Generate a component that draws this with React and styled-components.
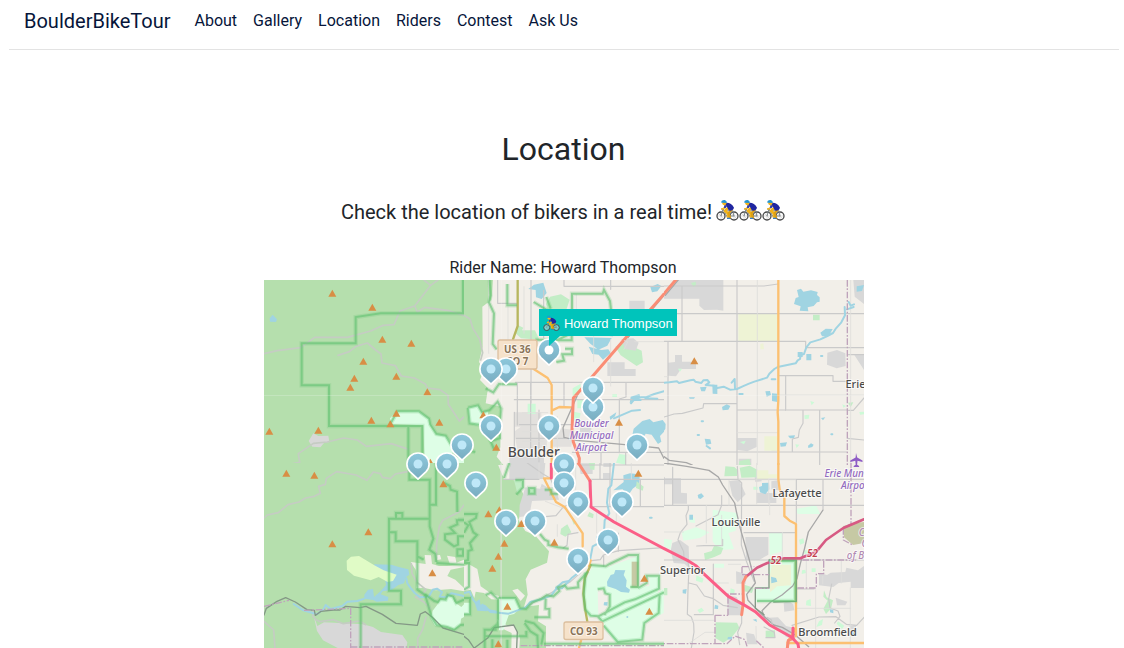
import React from "react";
import styled, { createGlobalStyle, css } from "styled-components";

const GlobalStyle = createGlobalStyle`
  * { box-sizing: border-box; }
  body {
    margin: 0;
    height: 648px;
    overflow: hidden;
    background: #fff;
    color: #212529;
    font-family: Roboto, "Liberation Sans", sans-serif;
    font-size: 16px;
    line-height: 24px;
  }
`;

const Page = styled.div`
  display: flex;
  flex-direction: column;
  height: 648px;
  padding: 0 5px 0 9px;
  overflow: hidden;
`;

const NavBar = styled.nav`
  display: flex;
  align-items: flex-start;
  flex: none;
  height: 50px;
  padding: 6px 15px 0;
  border-bottom: 1px solid #e3e3e3;
`;

const Brand = styled.a`
  margin-right: 24px;
  color: #06153a;
  font-size: 20px;
  line-height: 30px;
  white-space: nowrap;
`;

const NavLinks = styled.div`
  display: flex;
  gap: 16px;
  line-height: 29px;
`;

const NavLink = styled.a`
  color: #06153a;
  white-space: nowrap;
`;

const Main = styled.main`
  display: flex;
  flex-direction: column;
  align-items: center;
  padding-top: 80px;
`;

const Title = styled.h2`
  margin: 0 0 32px;
  padding-right: 1px;
  font-size: 32px;
  font-weight: 400;
  line-height: 38px;
`;

const Lead = styled.p`
  display: flex;
  align-items: center;
  margin: 0 0 32px;
  padding-right: 2px;
  font-size: 20px;
  line-height: 24px;
  white-space: nowrap;
`;

const Riders = styled.span`
  display: flex;
  margin: -3px 0 0 4px;
`;

const RiderName = styled.div`
  padding-right: 2px;
  line-height: 24px;
`;

const MapFrame = styled.div`
  position: relative;
  width: 600px;
  height: 368px;
  flex: none;
  overflow: hidden;
  background: #f2efe9;
`;

const MapCanvas = styled.svg`
  display: block;
`;

const fills = {
  forest: "#b5dfad",
  park: "#defee6",
  green: "#c3edc6",
  grey: "#d8d8d8",
  town: "#e2e0dd",
  water: "#a0d4e2",
  beige: "#f2efe9",
  meadow: "#eef3d5",
  lime: "#e0fbc6",
  olive: "#c6c9a4",
  mint: "#cdfad7",
};

const Area = styled.path`
  fill: ${(p) => fills[p.$kind]};
`;

const lines = {
  road: ["#cacaca", 3.5],
  minor: ["#dedddb", 2.5],
  trail: ["#c5ccc3", 5],
  rail: ["#a7a7a7", 4],
  darkTrail: ["#849886", 4],
  county: ["#bfa3bb", 4],
  orange: ["#fcc071", 7],
  olive: ["#b7b65f", 7],
  salmon: ["#fa8d75", 9],
  pink: ["#fb5f87", 9],
  toll: ["#d75a83", 8],
  river: ["#a0d4e2", 6],
};

const Line = styled.path`
  fill: none;
  stroke: ${(p) => lines[p.$kind][0]};
  stroke-width: ${(p) => lines[p.$kind][1]};
  stroke-linejoin: round;
  stroke-linecap: ${(p) => (p.$kind === "county" ? "butt" : "round")};
  ${(p) => p.$kind === "county" && css`stroke-dasharray: 20 5 5 5;`}
`;

const Halo = styled.path`
  fill: none;
  stroke: #62c272;
  stroke-linejoin: miter;
  stroke-width: ${(p) => p.$width};
  opacity: ${(p) => p.$alpha};
`;

const Peak = styled.path`
  fill: #d88e45;
`;

const MapLabel = styled.text`
  font-family: "Noto Sans", "Open Sans", sans-serif;
  font-size: ${(p) => p.$size || 11}px;
  font-style: ${(p) => (p.$italic ? "italic" : "normal")};
  font-weight: ${(p) => p.$weight || 500};
  fill: ${(p) => p.$color || "#4b4b4b"};
  stroke: rgba(255, 255, 255, 0.65);
  stroke-width: 2px;
  paint-order: stroke;
  text-anchor: middle;
`;

const Shield = styled.rect`
  fill: #f6e2ca;
  stroke: #dcbf9e;
  stroke-width: 1.3;
`;

const Pin = styled.svg`
  position: absolute;
  left: ${(p) => p.$x - 11.8}px;
  top: ${(p) => p.$y - 12}px;
  width: 24px;
  height: 30px;
  overflow: visible;
`;

const Tooltip = styled.div`
  position: absolute;
  left: 275px;
  top: 29px;
  display: flex;
  align-items: center;
  width: 138px;
  height: 27px;
  padding: 2px 0 0 4px;
  background: #00c4bb;
  color: #fff;
  font-family: "Liberation Sans", Arial, sans-serif;
  font-size: 13px;
  line-height: 20px;
  white-space: nowrap;

  &::after {
    content: "";
    position: absolute;
    left: 10px;
    top: 100%;
    border-top: 10px solid #00c4bb;
    border-right: 11px solid transparent;
  }
`;

const TooltipText = styled.span`
  margin-left: 4px;
  letter-spacing: -0.07px;
`;

function Cyclist({ size = 23 }) {
  return (
    <svg width={size} height={size} viewBox="0 0 69 69" fill="none">
      <circle cx="15" cy="51" r="12" fill="#fff" fillOpacity=".45" stroke="#48494a" strokeWidth="4" />
      <circle cx="54" cy="51" r="12" fill="#fff" fillOpacity=".45" stroke="#48494a" strokeWidth="4" />
      <path d="M15 40v22M4 51h22M54 40v22M43 51h22M7 43l16 16M46 43l16 16" stroke="#999" strokeWidth="1" />
      <path d="M15 51l6-21 12 23 17-18 4 16H34M22 36l27-1M15 30h9" stroke="#7b8589" strokeWidth="3" />
      <path d="M36 27l-9 9 9 7v13" stroke="#f2b31a" strokeWidth="8" strokeLinejoin="round" />
      <path d="M48 31L38 42l4 16" stroke="#dda013" strokeWidth="7" strokeLinejoin="round" />
      <path d="M29 12c9-2 20 4 25 14-2 7-9 11-16 8l-5-10-9-6z" fill="#2026a0" />
      <path d="M29 18l-5 10-8 3" stroke="#f5b51b" strokeWidth="5" />
      <path d="M29 19l-3 8" stroke="#2437bd" strokeWidth="6" />
      <circle cx="25" cy="13" r="6" fill="#f4b51c" />
      <path d="M16 9C17 2 29 1 32 8v4l-16-1z" fill="#2795d0" />
      <path d="M33 58h9" stroke="#397dc2" strokeWidth="4" />
    </svg>
  );
}

// Each tile is 200 by 185 px, drawn in a 600 by 555 coordinate space.
const tiles = [
  {
    x: 0, y: 0,
    areas: [
      ["forest", "M0 0H600V555H0Z"],
      ["park", "M380 432L378 415 398 394 465 393 495 416 497 434 517 462 545 467 560 485 572 515 555 522 600 540V555H482L478 436Z"],
      ["grey", "M148 460L163 468 193 467 196 486 180 489 169 502 145 500 134 483Z"],
      ["water", "M26 104L39 118 36 126 18 125 17 115Z"],
    ],
    lines: [
      ["trail", "M0 221L40 212 110 203 152 172 250 172 320 153 358 136 390 134 408 93 452 78 500 16 480 0M500 16L522 0M452 78L460 96 482 82 555 92 600 107"],
      ["trail", "M222 226L256 215 276 199 310 189 335 210 351 222 354 249 394 257 412 288 451 294 484 312 490 324 528 329 552 346 553 373 586 423 600 411"],
      ["trail", "M65 555L107 547 103 521 148 490 190 486 239 474 280 480 307 499 382 491 434 508"],
    ],
    borders: [
      "M597 0V100H350L275 111V190H113V316H195V438H475V555M433 438V555",
      "M380 430L400 394H465L495 416 499 434 517 462 545 467 565 500",
    ],
    peaks: [[205,40],[325,82],[355,178],[442,190],[298,244],[397,289],[271,295],[259,322],[490,336],[397,400],[322,421],[379,432],[526,427],[16,454],[163,451],[499,547]],
  },
  {
    x: 200, y: 0,
    areas: [
      ["forest", "M0 0H87L82 60 55 80 56 200 45 246 60 270 48 300 72 325 65 370 111 380 109 502 98 530 118 555H0Z"],
      ["park", "M12 382L42 376 52 397 73 392 69 427 48 438 16 430Z"],
      ["green", "M246 72L258 50 291 43 317 59 303 101 255 112Z M161 135L178 143 174 151 213 151 226 179 171 175 155 160Z M454 200L480 188 511 202 533 212 537 247 518 258 490 239 470 226Z"],
      ["mint", "M326 325L350 311 348 340 326 352Z M330 395L350 400 345 425 330 421Z M340 360H362V385H340Z"],
      ["grey", "M496 62H542V93H600V116H520V89H496Z M472 177L508 175 524 188 515 212 483 207Z M430 247H482V267H515V288H430Z M348 443H382V472H348Z"],
      ["town", "M150 455L200 419 251 426 248 500 161 514Z M150 397H232V440H150Z M255 440L330 450 322 500 262 500Z"],
      ["grey", "M136 527H240V555H136Z"],
      ["water", "M210 14L238 8 248 39 233 57 216 52 215 30 193 27Z M361 172L443 174 430 197 403 209 379 191Z M374 200L412 210 433 208 440 219 417 239 404 224 385 222Z M509 446L535 423 557 417 568 427 596 420 600 425V455L588 468 592 485 582 492 563 464 545 461 528 490 501 485Z M559 21L581 12 592 18 580 34 564 37Z M500 350L526 342 530 353 511 361 497 370Z M437 410L457 397 453 409 439 420Z"],
      ["mint", "M445 343H459V351H445Z M191 371H215V402H191Z M230 447H239V464H230Z M391 347L401 357 393 366Z M466 522L487 525 484 554 456 548Z"],
    ],
    lines: [
      ["road", "M201 0V370M101 0V70M300 19H600M300 0V19M101 70H160M239 31V173M154 307H600M486 307V351L466 357V518M151 359H600M160 307V435M200 310V520M151 397V502M225 390V545M300 307V380M166 434H327M157 475H303M325 517H600M411 517V555M485 517V555M440 0V28"],
      ["minor", "M74 0V220M132 80V180M180 20V160M337 45V110M389 107V245M400 155L446 170M512 185H600M440 178V318M175 398H251M175 455H300M177 484H235M280 410V520"],
      ["trail", "M0 106L18 117 27 146 47 178 56 218 50 240"],
      ["orange", "M209 267L251 294 263 315V555M263 392L286 381 322 382"],
      ["olive", "M161 0V138L147 178"],
      ["rail", "M604 42L492 173M345 335L297 443 300 472 337 481 450 491 546 500 584 504 600 535"],
      ["salmon", "M600 42L488 170 358 321 328 354 324 450 328 486 346 535 345 555"],
      ["minor", "M481 182L491 186 480 208"],
      ["river", "M501 370L513 356 532 352 548 351 571 342 600 334M508 360L530 360M544 355L580 356M450 415L504 392 528 390"],
    ],
    borders: [
      "M77 0L80 46 75 67 90 100 86 192 98 208",
      "M130 12V76H159M324 113V41H416L420 30 438 63 444 113M209 66L252 92M247 51L260 86M214 179L281 180 323 159 323 181H282M303 206H324V223H295L300 242 277 246",
      "M65 325L88 337 105 312 159 313M12 383L42 376 54 397 76 391 101 365 112 386 107 438 108 474 80 484 91 510M12 383L17 430 45 434M0 510L34 516",
    ],
    peaks: [[58,405],[97,502],[465,427]],
  },
  {
    x: 400, y: 0,
    areas: [
      ["grey", "M38 0H178V92L159 89 120 90 106 77 106 56H0V37Z M33 225H54V245H96V267H51L36 289 12 287V248L33 246Z M490 218L519 210 544 220 545 258 518 265 489 254Z M220 474H278V501L250 514 220 510Z M322 475H340V512H322Z M568 0H600V72L572 50Z M571 225H600V270Z M224 536H262V555H224Z"],
      ["meadow", "M223 102H343V183H223Z M301 469H340V512H301Z M289 192L298 190 300 208 289 208Z"],
      ["water", "M399 30L411 26 418 35 441 31 461 36 459 45 467 52 467 65 459 67 449 78 431 82 433 94 407 92 410 79 390 72 395 54 404 51Z M401 216H416V231H401Z M427 222H442V241H427Z M469 158L485 146 506 147 495 167 474 169Z M174 381L188 373 199 378 193 389 176 391Z M304 334L318 333 321 345 308 350Z M324 340L340 341 340 366 324 363Z M145 314H160V342L146 341Z M108 322L128 320 123 334 112 334Z M122 476L139 478 142 491 126 494Z M348 489L369 487 365 499 350 500Z M372 467L393 466 390 475 378 475Z M432 497L441 490 449 494 445 501 433 504Z M471 414L484 412 477 421Z M578 19L600 15 594 33 578 35Z M75 352L93 352 90 356 77 356Z M0 425L5 432 4 447 0 452Z"],
      ["green", "M447 104H467V121H447Z M81 9L95 5 96 15 89 21Z M226 543L256 537 261 555H224Z M552 368L568 367 560 382Z"],
      ["mint", "M42 266L54 266 48 275Z M439 363L451 367 443 376Z M421 406L436 404 434 416 422 417Z M535 373L546 378 538 383Z M228 486L245 482 240 493Z M394 493L406 494 398 504Z M586 396L600 395V403L588 404Z"],
    ],
    lines: [
      ["road", "M0 18H300L342 12M0 101H600M54 20V184M0 184H425V203H600M12 184V555M219 0V555M343 287H507V304H560M219 390H550M0 411L30 402 55 400 117 384 119 371H219M365 289V391M417 391V430L406 450 403 472 385 477V515M467 390V555M0 516H550M550 224H600M550 391H568L600 354M550 475L600 480"],
      ["minor", "M280 0V555M219 458H340M0 290H12M560 0V555M343 345H600M0 100L20 99"],
      ["river", "M0 308L16 307 39 304 45 309 79 301 89 299 94 305 112 309 118 301 130 300 136 307 125 315 151 317 160 324 179 320 198 329 219 327 236 319 255 311 271 305 309 293 316 281 331 267 341 261 395 250 401 241 408 237 410 225 420 222 427 202 439 187 469 178 490 168 507 159 516 145 532 127 543 106 542 81M203 308L212 297 213 327M323 298H334M226 342H236"],
      ["river", "M554 66L560 77 570 73M549 88L569 81M471 228H475M101 465H105M113 424H117M502 463H505M128 498L138 505"],
      ["orange", "M343 0V361L341 397 343 425V555"],
      ["rail", "M4 46L46 -4"],
      ["salmon", "M-4 46L40 -6"],
      ["county", "M550 0V555"],
      ["rail", "M0 530L16 541 67 548 85 555"],
    ],
    borders: [], peaks: [[91,243]],
  },
  {
    x: 0, y: 183,
    areas: [
      ["forest", "M0 0H600V555H0Z"],
      ["grey", "M148 454L160 489 180 478 297 484 327 492 351 507 415 516 430 538 427 555H221L177 532 159 504Z"],
      ["beige", "M440 297L485 303 482 276 501 277 504 303 525 309H549L600 305V312L560 320 550 339 574 350 600 375V385L561 378 515 382 477 374 456 376 460 353 455 320Z M516 277L528 276 532 289 517 292Z M549 278L574 282 577 299 600 290V306L557 302Z"],
      ["water", "M331 304L382 305 407 313 433 319 436 335 426 342 420 361 403 366 383 381 356 385 350 394 373 402 372 413 338 416 327 411 301 407 301 395 312 380 327 378 330 402 351 383 366 366 364 352 347 332 371 330 330 312Z"],
      ["lime", "M248 293L261 281 285 279 331 307 359 322 398 335 387 354 371 357 344 342 320 352 270 338 249 321Z"],
      ["park", "M521 424L529 409 546 409 550 398 567 401 571 416 592 432 600 424V462L591 467 589 486 570 499 535 490 513 488 500 464 506 443Z"],
    ],
    lines: [
      ["trail", "M0 165L10 156 43 149 72 125 105 117 125 105 151 100 169 91 164 70 184 64 187 46 218 26 276 36 309 52 328 27 349 32 355 43 379 47 394 33 415 29 434 25"],
      ["trail", "M0 475L29 501 33 555M148 441L146 459 156 470 169 476 208 470 238 482 286 474 305 485M600 126L584 148 536 172 526 190 518 241 517 291M442 302L444 331 459 358 486 380 473 395 454 402 481 418 499 437M486 462L476 499 461 526 461 555"],
      ["river", "M89 423L118 442 159 454 179 438 185 426 200 438 235 429 250 416 280 414 301 407M427 346L430 361 439 374 452 390 468 403 494 401 506 380 519 377 534 387 527 401 545 403 562 391 600 399"],
      ["darkTrail", "M0 456L7 436 39 415 65 404 94 417 129 440 151 442 154 457 171 445 208 441 228 441 245 430 288 434 306 430 355 454 396 481 460 487 469 453 484 446 505 463 537 495 600 514"],
      ["county", "M0 430L75 412M120 442L260 436V555M260 552H600"],
    ],
    borders: [
      "M436 0V50H497V190L508 227 496 260 514 273 517 297M516 0V125H497M496 167H375V383H411V424H290V555M396 165V150H415V165M375 208H395V235H460V280L479 290M460 235V380L490 401",
      "M582 170H600M580 147L579 86 560 80 558 69 540 60M600 172H579L580 184 558 194 573 210 543 214V230L570 250 582 245V220H600M580 259H597V278H580ZM517 300L600 305",
      "M483 394L511 414 522 417 529 408 545 410 551 396 567 401 577 420 600 410M483 394L503 463 518 486 549 492 571 500 589 486 600 485",
    ],
    peaks: [[67,31],[151,37],[538,63],[313,207],[205,243],[505,330]],
  },
  {
    x: 200, y: 183,
    areas: [
      ["forest", "M0 0H100L120 48 152 52 177 91 180 130 163 170 184 204 213 217 255 265 249 299 200 320 185 349 191 395 180 432 225 426 222 475 246 490 246 555H0Z"],
      ["beige", "M0 309L15 304 40 318 50 370 82 392 105 399 104 410 82 409 60 390 35 386 31 405 20 380 0 384Z M145 382L161 377 183 398 170 414Z M100 468L132 490 148 484 168 524 166 555H142L143 510 105 492Z"],
      ["grey", "M136 0H244L240 48H136Z M184 73L229 77 233 62 280 92 285 110 204 114 196 158 166 162 167 126Z M344 1H386V33H350Z M417 30H438V50H417Z M418 0H442V12H418Z"],
      ["park", "M104 405H155L168 436 150 453 134 457 118 502 105 502Z M385 308L431 313 523 278 522 370H556V340H585V376L580 393 599 376V450L542 480 534 530 454 536 417 487 402 458 376 462 361 445 363 360Z M0 419H18V454H0Z"],
      ["beige", "M401 379L421 377 424 391 438 395V431L423 456 403 458Z"],
      ["olive", "M503 296H523V374H503Z"],
      ["water", "M429 356L440 336 450 333 454 321 484 322 479 336 488 352 486 371 498 380 495 389 471 387 455 378 430 370Z M478 37L498 31 517 33 527 43 526 62 506 77 497 91 485 91 476 79 448 82 479 57Z M294 207L303 190 318 201 303 216Z M420 418L431 417 430 428 419 427Z M32 419L47 409 50 428 65 433 69 445 40 443Z"],
      ["green", "M150 52L178 54 176 76 160 91Z M195 76H212V92H195Z M518 55L539 71 536 83 516 75Z M376 147L389 154 387 166 370 160Z M291 197L310 184 322 208 304 221 289 213Z M324 172L337 174 330 186Z M374 0H393L391 21 379 19Z"],
    ],
    lines: [
      ["road", "M190 0L237 33 259 46 271 75M120 49H225M376 49H600M343 6H600M408 0V48M438 0V130M529 48V130M384 131H600M244 161L276 158 298 132 311 126M298 255L309 247 312 214 342 209M383 293L409 290 418 276 464 263 600 254M419 278V310M463 210V265M195 427L317 358 350 329"],
      ["minor", "M111 0V555M225 0V46M230 74H313M244 115L304 138M335 0V80M502 0V48M382 49V135M457 140V180M280 185V220M398 150V210"],
      ["river", "M450 0L442 67 433 77 429 119 436 151 422 172 420 208 399 223 405 240 386 250 379 287M0 390L17 386 27 410 42 428 62 428 80 447 134 452 185 433 199 417 238 407 262 397 277 377 294 376 322 346 342 330"],
      ["river", "M55 425L67 440 98 446M276 375L296 358 315 354M490 462H490M558 164H563"],
      ["orange", "M259 46H240L264 94 276 117 302 132 356 211V250M375 309L380 292M345 555L353 525"],
      ["olive", "M380 306L362 346 358 391 363 436 370 476"],
      ["pink", "M262 0V45"],
      ["salmon", "M343 0L378 54"],
      ["pink", "M378 54L381 132 450 177 604 259"],
      ["darkTrail", "M0 520L13 530 30 555M31 555L72 524 91 494 149 486 160 507 158 555"],
      ["county", "M170 548H600"],
    ],
    borders: [
      "M0 153H38L36 165 16 177 28 208 39 216 18 240 24 260 13 264 12 291 0 295M0 178L13 187 0 209M0 300H15V371L0 380",
      "M136 0L120 45M154 51H177V73L157 95M195 75H212V92H195ZM242 80H262V92H283",
      "M228 213L242 230 253 235 253 246 282 253 314 257",
      "M0 405H18V454H0M65 396L81 389 102 409V496M103 405H154L168 436 186 438 205 418 231 408 248 397 268 400 286 384 282 373 302 367 310 377 343 373 342 358 372 325",
      "M245 407L244 437 256 438V463H211M62 555V500H95V488L80 500M182 474L210 481 239 510 232 545M62 520H187V503M182 480L199 505 220 518 222 555M85 529V555M130 530V555M240 542H600",
      "M380 306L425 310 437 303 493 276H522V372H499M365 329L359 396 364 440 380 458 401 460 415 475 600 388M401 379L419 376 424 391 437 395V431L421 456M522 375L548 360V338H585V377L513 409 482 418 403 460M587 394L584 450L541 480 535 530 461 537 419 488",
    ],
    peaks: [[523,31],[73,153],[106,141],[172,182],[121,241],[271,238],[103,280],[85,316],[541,346],[130,430],[556,445],[103,543]],
  },
  {
    x: 400, y: 183,
    areas: [
      ["grey", "M0 46H51V89L69 91V122H26V64H0Z M195 54L225 51 245 94 221 118 205 98Z M271 35L291 32 293 55 274 57Z M322 55L343 52V82L322 79Z M277 89L337 91V120H277Z M244 222H313V275L285 291H246Z M25 240L48 231 74 250 76 315 61 302 29 300 20 263Z M465 330L489 336 500 329 544 327 547 314 582 322 600 309V375H560V356L524 360 508 372 465 367Z M191 397L218 402 237 443V457H191Z M359 420L373 413 388 424 391 442 361 446Z M216 325L246 333 245 362H217Z M300 465L342 463 366 489 393 495 394 533 366 521 335 493Z M246 509L270 514 281 544H250Z M515 404L550 416 544 427 519 427Z M556 490L576 487 576 500 558 500Z"],
      ["park", "M315 291H397V417H275V371H314Z M146 140L220 150 215 203 193 210 210 258 164 262 146 235Z M53 207L96 193 137 208 107 225 58 233Z M0 227L24 231 20 258 0 250Z M315 210H356V264L317 277Z M75 166L92 164 93 180 77 178Z M151 302H180V314H151Z M395 138L456 127 469 153H401Z"],
      ["green", "M120 271L143 264 151 247 178 255 171 273 151 282 123 292Z M184 10L211 12 222 22 219 39 181 40Z M227 14L257 8 280 20 279 43 232 44Z M155 478L219 479 226 494 203 523 178 539 154 525Z M241 365L269 374 264 390 241 385Z M305 503L333 502V524H305Z M480 382L488 403 507 412 501 437 486 453 478 437 491 413 478 401Z M0 375H10V397H0Z"],
      ["olive", "M538 189L580 179 600 177V240L567 246 540 223Z"],
      ["meadow", "M279 22H313V48H279Z M297 34H340V45H297Z M323 305H381V367L339 370 319 388 315 358Z"],
      ["water", "M294 60L315 59 316 79 304 94 288 88 285 72 294 69Z M76 155H87V170H76Z M101 96L112 91 120 100 110 108 103 106Z M56 380L68 378 66 392 56 391Z M321 341L336 345 340 356 322 361Z M153 425L163 428 162 438 151 437Z M498 439L508 440 508 451 498 448Z M560 506L576 510 574 519 558 519Z M266 470L277 468 279 477Z M192 522L205 521 204 530 190 529Z"],
      ["mint", "M268 71H281V80H268Z M97 337L119 347 115 359 96 353Z M200 376L212 380 211 397 198 391Z M443 316H455V327H443Z M465 475L477 468 474 486 457 492Z M522 475L541 488 534 499 518 482Z M100 441L113 434 120 443 107 450Z M427 413L440 408 441 429 426 427Z M414 322L424 320 426 330 413 333Z M405 230L418 226 421 240 408 245Z M421 261L436 263 432 273 421 272Z"],
    ],
    lines: [
      ["road", "M0 49H600M0 127H600M0 43V127M26 13V127M73 127V140L66 158 69 184 49 209 42 230 59 266 60 282M173 98V127L162 155 96 189M220 10L222 48 233 60 232 246 247 294 270 355M98 249L120 248 176 248 176 229M60 286L72 298 75 315 72 380 70 454 82 462 89 482 90 507 82 555M0 291H600M148 303V455H91M75 360L98 366 121 399 148 407 177 427 220 434M233 450V480L221 508 227 545M397 51V178M397 209H240M477 49V138M397 378H450M503 363L494 408 498 435 522 444 528 460 512 480M384 487L465 462 516 461 547 484 578 487 600 463"],
      ["minor", "M0 207H58M127 127V240M173 157V246M195 52V127M225 50H395M278 0V123M314 49V124M355 208V285M193 304H230M151 360H193M191 393V455M0 472H152M75 541L123 508H151M455 380V555M398 436H560M559 375V555M532 291V360M427 291V370M476 340V363M317 112V155M276 490L277 533"],
      ["rail", "M0 0L68 10 135 22 163 42 176 66 212 120 217 145 229 197 256 291 274 360 248 394 252 412 289 450 329 486 355 493 394 516 434 551M477 141L433 207 421 259 409 302 399 347 386 369 354 396 320 417 294 443 303 465"],
      ["road", "M300 492L331 508 333 524 306 524M309 463L322 470 326 491"],
      ["orange", "M343 0V48L347 80 361 101V159L377 173 396 183V493L371 537 370 555M396 492V520M370 540H600"],
      ["darkTrail", "M315 291V375H274V436L300 455M315 291H397V415L329 417"],
      ["county", "M561 0V183L538 193V231L566 246M575 291H409M400 375H457V332H479V293M274 376H315M234 311V335M234 311H271M234 335H315M192 457V393H235M153 457H192M153 457V542H0M153 542H189L214 519 243 530 249 550M277 533L300 555"],
      ["toll", "M600 169L538 195 486 231 457 266 409 286 361 286 310 300 279 314 246 341"],
      ["salmon", "M246 341L237 359 238 418 233 455M370 555L373 532 388 526"],
      ["pink", "M0 257L70 292 97 309 118 331 193 400 237 424 274 446 317 486 382 522 402 543 404 555M387 495V521"],
    ],
    borders: ["M315 294H394V414H279"],
    peaks: [],
  },
];

function Tile({ tile }) {
  return (
    <svg x={tile.x} y={tile.y} width="200" height="185" viewBox="0 0 600 555">
      {tile.areas.map(([kind, d], i) => <Area key={i} $kind={kind} d={d} />)}
      {tile.lines.map(([kind, d], i) => <Line key={i} $kind={kind} d={d} />)}
      {tile.borders.map((d, i) => (
        <g key={i}>
          <Halo $width={13} $alpha={0.22} d={d} />
          <Halo $width={6} $alpha={0.6} d={d} />
        </g>
      ))}
      {tile.peaks.map(([x, y], i) => <Peak key={i} d={`M${x} ${y - 11}l12 21h-24z`} />)}
    </svg>
  );
}

const purple = "#936bc0";
const labels = [
  [269.7, 177, "Boulder", { $size: 13.8 }],
  [327.5, 147, "Boulder", { $size: 9.8, $italic: true, $color: purple }],
  [327.5, 159, "Municipal", { $size: 9.8, $italic: true, $color: purple }],
  [327.5, 171, "Airport", { $size: 9.8, $italic: true, $color: purple }],
  [591.5, 108, "Erie", {}],
  [533, 216.5, "Lafayette", {}],
  [472, 246, "Louisville", {}],
  [418.5, 294, "Superior", {}],
  [563.5, 355.5, "Broomfield", {}],
  [592, 197, "Erie Municipal", { $size: 9.8, $italic: true, $color: purple }],
  [592.5, 209, "Airport", { $size: 9.8, $italic: true, $color: purple }],
  [613, 256, "City and", { $size: 9.8, $italic: true, $color: "#b18bb4" }],
  [613, 267, "County", { $size: 9.8, $italic: true, $color: "#b18bb4" }],
  [613, 279, "of Broomfield", { $size: 9.8, $italic: true, $color: "#b18bb4" }],
  [512, 284, "52", { $size: 9.8, $italic: true, $weight: 600, $color: "#c33d4f" }],
  [548.5, 277, "52", { $size: 9.8, $italic: true, $weight: 600, $color: "#c33d4f" }],
];

// Pins are listed in stacking order; the last one is on top.
const pins = [
  [241.3, 89.3], [226.7, 89.3], [285, 70.3, true],
  [328.7, 127.3], [328.7, 108.3],
  [226.7, 146.3], [285, 146.3], [372.3, 165.3],
  [197.7, 165.3], [153.7, 184.3], [183, 184.3],
  [299.3, 184.3], [212, 203.3], [299.3, 203.3],
  [314, 222.3], [357.7, 222.3], [241.3, 241], [270.3, 241],
  [343.3, 260.3], [314, 279.3],
];

function RiderMap() {
  return (
    <MapFrame>
      <MapCanvas width="600" height="368" viewBox="0 0 600 368">
        {tiles.map((tile, i) => <Tile key={i} tile={tile} />)}
        <path d="M0 115.5H600M237.3 0V368" stroke="#fff" strokeOpacity=".2" />
        <Shield x="234" y="60" width="39" height="29" rx="2" />
        <Shield x="300" y="342" width="39" height="17.5" rx="2" />
        <MapLabel x="253.3" y="72.5" $size={9.8} $weight={700} $color="#8a7358">US 36</MapLabel>
        <MapLabel x="253.3" y="84.5" $size={9.8} $weight={700} $color="#8a7358">CO 7</MapLabel>
        <MapLabel x="319.7" y="354.7" $size={9.8} $weight={700} $color="#8a7358">CO 93</MapLabel>
        {labels.map(([x, y, text, style], i) => (
          <MapLabel key={i} x={x} y={y} {...style}>{text}</MapLabel>
        ))}
        <path d="M592 173l1.2 4.5 5.3 3v1.5l-5-1.3-.4 4 2 1.4v1h-5.4v-1l2-1.4-.4-4-5 1.3v-1.5l5.3-3z" fill="#8e5cc5" />
      </MapCanvas>
      {pins.map(([x, y, active], i) => (
        <Pin key={i} $x={x} $y={y} viewBox="0 0 24 30">
          <path
            d="M12 27.2L3.9 19.7A11.1 11.1 0 1 1 20.1 19.7Z"
            fill="url(#pin-shade)" stroke="#fff" strokeWidth="1.7" strokeLinejoin="round"
          />
          <circle cx="12" cy="12" r="4.5" fill={active ? "#fff" : "#bfe8f8"} />
        </Pin>
      ))}
      <Tooltip>
        <Cyclist size={17} />
        <TooltipText>Howard Thompson</TooltipText>
      </Tooltip>
      <svg width="0" height="0">
        <defs>
          <linearGradient id="pin-shade" x1="0" y1="0" x2="0" y2="1">
            <stop offset="0" stopColor="#8dc8dc" />
            <stop offset="1" stopColor="#79acc0" />
          </linearGradient>
        </defs>
      </svg>
    </MapFrame>
  );
}

const links = ["About", "Gallery", "Location", "Riders", "Contest", "Ask Us"];

export default function App() {
  return (
    <Page>
      <GlobalStyle />
      <NavBar>
        <Brand>BoulderBikeTour</Brand>
        <NavLinks>
          {links.map((name) => <NavLink key={name}>{name}</NavLink>)}
        </NavLinks>
      </NavBar>
      <Main>
        <Title>Location</Title>
        <Lead>
          Check the location of bikers in a real time!
          <Riders><Cyclist /><Cyclist /><Cyclist /></Riders>
        </Lead>
        <RiderName>Rider Name: Howard Thompson</RiderName>
        <RiderMap />
      </Main>
    </Page>
  );
}
